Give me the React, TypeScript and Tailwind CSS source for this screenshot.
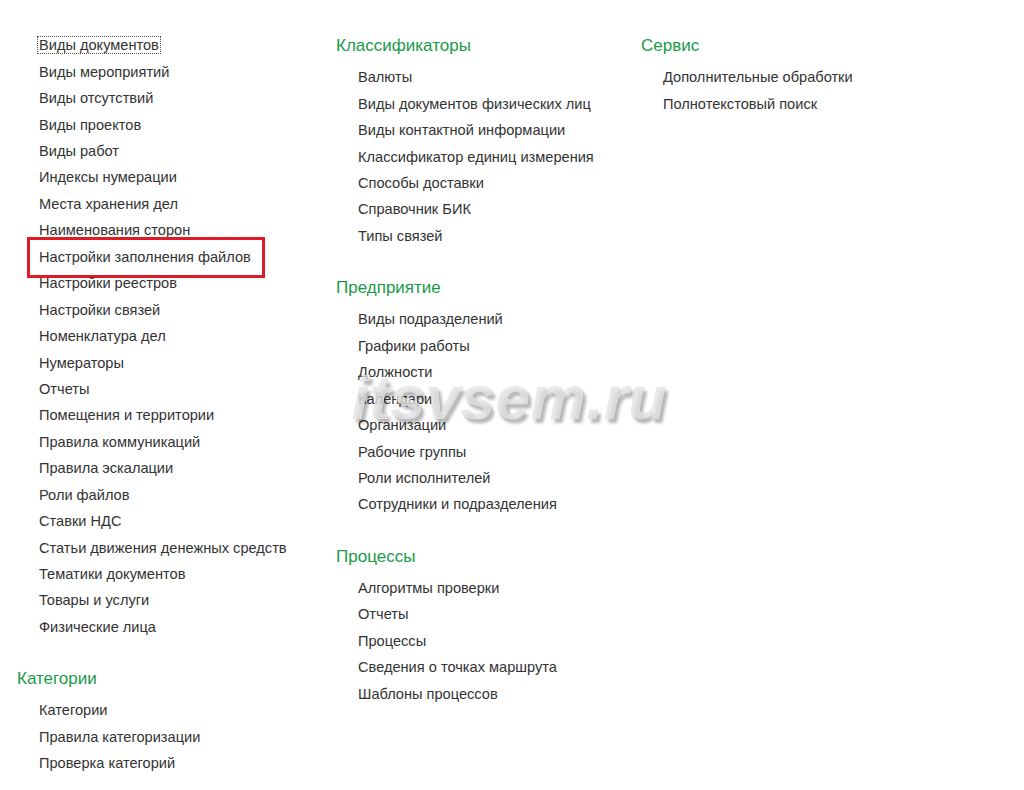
const mainItems = [
  "Виды документов",
  "Виды мероприятий",
  "Виды отсутствий",
  "Виды проектов",
  "Виды работ",
  "Индексы нумерации",
  "Места хранения дел",
  "Наименования сторон",
  "Настройки заполнения файлов",
  "Настройки реестров",
  "Настройки связей",
  "Номенклатура дел",
  "Нумераторы",
  "Отчеты",
  "Помещения и территории",
  "Правила коммуникаций",
  "Правила эскалации",
  "Роли файлов",
  "Ставки НДС",
  "Статьи движения денежных средств",
  "Тематики документов",
  "Товары и услуги",
  "Физические лица",
]

const sections: Record<string, { title: string; items: string[] }[]> = {
  left: [
    { title: "Категории", items: ["Категории", "Правила категоризации", "Проверка категорий"] },
  ],
  middle: [
    {
      title: "Классификаторы",
      items: [
        "Валюты",
        "Виды документов физических лиц",
        "Виды контактной информации",
        "Классификатор единиц измерения",
        "Способы доставки",
        "Справочник БИК",
        "Типы связей",
      ],
    },
    {
      title: "Предприятие",
      items: [
        "Виды подразделений",
        "Графики работы",
        "Должности",
        "Календари",
        "Организации",
        "Рабочие группы",
        "Роли исполнителей",
        "Сотрудники и подразделения",
      ],
    },
    {
      title: "Процессы",
      items: [
        "Алгоритмы проверки",
        "Отчеты",
        "Процессы",
        "Сведения о точках маршрута",
        "Шаблоны процессов",
      ],
    },
  ],
  right: [
    { title: "Сервис", items: ["Дополнительные обработки", "Полнотекстовый поиск"] },
  ],
}

const Item = ({ label, focused, marked }: { label: string; focused?: boolean; marked?: boolean }) => (
  <li className="h-[26.45px] flex items-center">
    <span className="relative">
      <span className={focused ? "outline outline-1 outline-dotted outline-[#555] outline-offset-0 px-px -mx-px" : ""}>{label}</span>
      {marked && (
        <span className="absolute -left-[12px] -right-[14px] -top-[10px] -bottom-[9px] border-[3px] border-[#e01b24]" />
      )}
    </span>
  </li>
)

const Section = ({ title, items, first }: { title: string; items: string[]; first?: boolean }) => (
  <div className={first ? "" : "mt-[25px]"}>
    <h2 className="h-[26px] leading-[26px] mb-[6px] text-[17px] text-[#1a9a48]">{title}</h2>
    <ul className="pl-[22px]">
      {items.map((t) => (
        <Item key={t} label={t} />
      ))}
    </ul>
  </div>
)

export default function App() {
  return (
    <div className="relative w-[1024px] h-[790px] bg-white overflow-hidden text-[14.6px] text-[#333] font-['Liberation_Sans',Arial,sans-serif]">
      <div className="flex pt-[33px] pl-[17px]">
        <div className="w-[319px] shrink-0">
          <ul className="pl-[22px]">
            {mainItems.map((t, i) => (
              <Item key={t} label={t} focused={i === 0} marked={t === "Настройки заполнения файлов"} />
            ))}
          </ul>
          {sections.left.map((s) => (
            <Section key={s.title} {...s} />
          ))}
        </div>
        <div className="w-[305px] shrink-0">
          {sections.middle.map((s, i) => (
            <Section key={s.title} {...s} first={i === 0} />
          ))}
        </div>
        <div className="w-[300px] shrink-0">
          {sections.right.map((s) => (
            <Section key={s.title} {...s} first />
          ))}
        </div>
      </div>
      {/* watermark */}
      <div className="absolute left-[352px] top-[367px] leading-none text-[62px] font-bold italic tracking-[0.5px] text-[rgba(255,255,255,0.7)] font-['Liberation_Sans',Arial,sans-serif] [text-shadow:3px_4px_3px_rgba(0,0,0,0.28),0_0_1px_rgba(0,0,0,0.3)] select-none pointer-events-none">
        itsvsem.ru
      </div>
    </div>
  )
}
